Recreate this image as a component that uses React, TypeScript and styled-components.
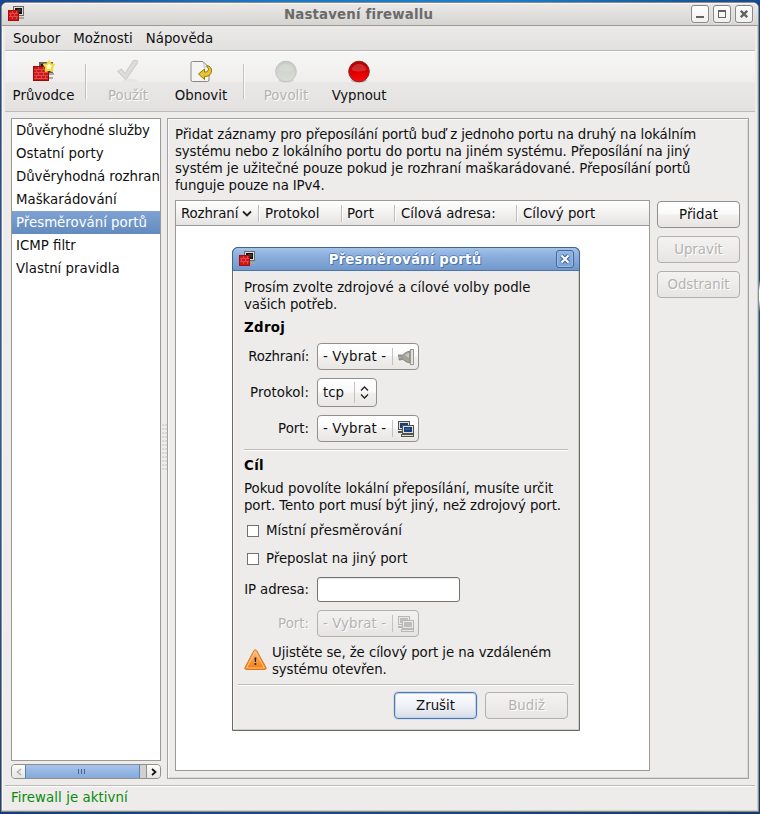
import React from 'react';
import styled, { createGlobalStyle, css } from 'styled-components';

const Global = createGlobalStyle`
  * { box-sizing: border-box; }
  body {
    margin: 0;
    font-family: "DejaVu Sans", sans-serif;
    font-size: 13.333px;
    line-height: 17px;
    color: #101010;
  }
`;

const Desktop = styled.main`
  width: 760px;
  height: 814px;
  padding: 2px 1px;
  overflow: hidden;
  background:
    linear-gradient(90deg, #1a4590, #1c78c4 35%, #1a80cc 65%, #174a8c) top / 100% 3px no-repeat,
    linear-gradient(90deg, #153d7c, #1d4a82 40%, #143c68) bottom / 100% 3px no-repeat,
    linear-gradient(180deg, #174480 0 280px, #f4ffff 290px 300px, #1a4f88 312px, #143860) right / 2px 100% no-repeat,
    linear-gradient(180deg, #1a4590, #2060b0 50%, #1a3f7c);
`;

const Window = styled.section`
  width: 758px;
  height: 810px;
  border: 1px solid #8e8c88;
  border-radius: 6px 6px 0 0;
  background: #edeceb;
  display: flex;
  flex-direction: column;
  box-shadow: inset -1px -1px #cfcdca, inset 1px 0 #f8f8f7;
`;

const TitleBar = styled.header`
  height: 23px;
  flex: none;
  display: grid;
  grid-template-columns: 24px 1fr 67px;
  align-items: center;
  border-bottom: 1px solid #9c9a96;
  border-radius: 5px 5px 0 0;
  box-shadow: inset 0 1px #f8f8f7;
  background: linear-gradient(#ebeae8, #d6d4d1);
`;

const Title = styled.h1<{ $light?: boolean }>`
  margin: 0;
  font-size: 13.333px;
  font-weight: bold;
  letter-spacing: 0.18px;
  text-align: center;
  white-space: nowrap;
  color: ${p => (p.$light ? '#fff' : '#6a6a6a')};
  ${p => p.$light && css`text-shadow: 1px 1px #4a74aa, -1px 0 #5f88bd, 0 -1px #5f88bd;`}
`;

const Line = styled.span<{ $track?: number }>`
  letter-spacing: ${p => p.$track ?? 0}px;
`;

const WindowButtons = styled.div`
  display: flex;
  gap: 4px;
`;

const WindowButton = styled.button<{ $blue?: boolean }>`
  width: 18px;
  height: 18px;
  padding: 0;
  display: grid;
  place-items: center;
  border: 1px solid ${p => (p.$blue ? '#3f6799' : '#8a8885')};
  border-radius: 3px;
  background: ${p => (p.$blue ? 'linear-gradient(#93b4e0, #7da2d3)' : 'linear-gradient(#fff, #f0f0ef)')};
  box-shadow: ${p => (p.$blue ? 'inset 0 0 0 1px #9dbbe4' : '0 0 0 1px #e4e3e1')};
`;

const MenuBar = styled.nav`
  height: 25px;
  margin: 0 3px;
  flex: none;
  display: flex;
  gap: 13px;
  padding: 4px 8px 0;
  border-bottom: 1px solid #bcbab8;
  background: linear-gradient(#ebeae9, #e2e1e0);
`;

const ToolBar = styled.div`
  height: 61px;
  margin: 0 3px;
  flex: none;
  display: flex;
  border-top: 1px solid #fff;
  border-bottom: 1px solid #bcbab8;
  background: linear-gradient(#f6f6f4, #efeeed 50%, #e9e8e7 51%, #e3e2e1);
`;

const Tool = styled.div<{ $w: number; $off?: boolean }>`
  width: ${p => p.$w}px;
  display: flex;
  flex-direction: column;
  align-items: center;
  padding-top: 7px;
  gap: 4px;
  white-space: nowrap;
  ${p => p.$off && css`color: #b5b3b0; text-shadow: 1px 1px #fff;`}
  svg { height: 24px; }
`;

const ToolDivider = styled.i<{ $left: number }>`
  width: 2px;
  height: 35px;
  margin: 12px 0 0 ${p => p.$left}px;
  border-left: 1px solid #c4c2c0;
  border-right: 1px solid #fafafa;
`;

const Workspace = styled.div`
  height: 673px;
  flex: none;
  display: flex;
  padding: 6px 8px 6px 9px;
`;

const SideColumn = styled.aside`
  width: 150px;
  height: 661px;
  display: flex;
  flex-direction: column;
  gap: 3px;
`;

const List = styled.ul`
  list-style: none;
  margin: 0;
  padding: 0;
  height: 643px;
  border: 1px solid #9c9a95;
  background: #fff;
  overflow: hidden;
`;

const ListItem = styled.li<{ $on?: boolean }>`
  height: 23px;
  padding: 3px 0 0 4px;
  white-space: nowrap;
  ${p => p.$on && css`background: linear-gradient(#7fa2d3, #638bbf); color: #fff;`}
`;

const ScrollBar = styled.div`
  height: 15px;
  display: flex;
  border: 1px solid #918f8b;
  border-radius: 4px;
  overflow: hidden;
  background: #d3d1ce;
`;

const ScrollArrow = styled.div<{ $end?: boolean }>`
  width: ${p => (p.$end ? 14 : 13)}px;
  display: grid;
  place-items: center;
  background: linear-gradient(#fbfbfa, #e6e5e4);
  ${p => p.$end && css`margin-left: auto; border-left: 1px solid #918f8b;`}
`;

const ScrollThumb = styled.div`
  width: 115px;
  display: flex;
  align-items: center;
  justify-content: center;
  gap: 2px;
  padding-right: 2px;
  border: 1px solid #5b80b3;
  border-width: 0 1px;
  background: linear-gradient(#a6c3eb, #86a9da);
  i { width: 1px; height: 5px; background: #45658f; }
`;

const Splitter = styled.div`
  width: 6px;
  height: 48px;
  margin-top: 306px;
  background: radial-gradient(circle at 1px 1px, #c8c6c3 0 0.5px, transparent 1px) 1px 0 / 3px 4px;
`;

const Frame = styled.section`
  width: 582px;
  height: 661px;
  border: 1px solid #a5a29e;
  box-shadow: inset 1px 1px #f9f9f8, inset -1px -1px #dad8d6;
  padding: 7px;
`;

const Intro = styled.div`
  height: 74px;
  display: flex;
  flex-direction: column;
  white-space: nowrap;
`;

const PortArea = styled.div`
  display: flex;
  gap: 7px;
`;

const Table = styled.div`
  width: 475px;
  height: 571px;
  border: 1px solid #9c9a95;
  background: #fff;
`;

const TableHead = styled.div`
  height: 25px;
  display: flex;
  align-items: center;
  border-bottom: 1px solid #9c9a95;
  background: linear-gradient(#fff, #f3f2f1 50%, #e4e3e2);
`;

const Column = styled.div<{ $w?: number; $pad: number }>`
  ${p => (p.$w ? css`width: ${p.$w}px;` : css`flex: 1;`)}
  height: 17px;
  padding-left: ${p => p.$pad}px;
  display: flex;
  align-items: center;
  gap: 4px;
  white-space: nowrap;
  & + & { border-left: 1px solid #bfbdba; box-shadow: inset 1px 0 #fff; }
`;

const ActionColumn = styled.div`
  display: flex;
  flex-direction: column;
  gap: 8px;
  padding-top: 1px;
`;

const Button = styled.button<{ $off?: boolean; $focus?: boolean }>`
  width: 83px;
  height: 27px;
  padding: 0 0 1px;
  font: inherit;
  color: #101010;
  border: 1px solid #928f8b;
  border-radius: 4px;
  background: linear-gradient(#fff, #fafafa 45%, #f0efee 55%, #e6e5e4);
  ${p => p.$off && css`
    color: #b5b3b0; text-shadow: 1px 1px #fff; border-color: #b3b0ac;
    background: linear-gradient(#f3f2f1, #edecea 50%, #e6e5e3);
  `}
  ${p => p.$focus && css`
    border-color: #4d78b0; box-shadow: inset 0 0 0 1px #c5d4e8, 0 0 0 1px #d5dfeb;
    background: linear-gradient(#fbfcfe, #eff2f7 50%, #d8dde6);
  `}
`;

const StatusBar = styled.footer`
  flex: 1;
  margin: 0 3px;
  padding: 3px 6px 0;
  border-top: 1px solid #bcbab8;
  box-shadow: inset 0 1px #fff;
  color: #0b8a0b;
`;

const Dialog = styled.section`
  position: absolute;
  left: 232px;
  top: 247px;
  width: 348px;
  height: 484px;
  display: flex;
  flex-direction: column;
  border: 1px solid #6a6865;
  border-radius: 6px 6px 0 0;
  background: #edeceb;
  box-shadow: inset -1px -1px #cfcdca, inset 1px 0 #f8f8f7;
`;

const DialogTitle = styled.header`
  flex: none;
  height: 24px;
  margin: -1px -1px 0;
  display: grid;
  grid-template-columns: 23px 1fr 23px;
  align-items: center;
  border: 1px solid #41648f;
  border-bottom-color: #4d74a8;
  border-radius: 6px 6px 0 0;
  background: linear-gradient(#a6c3ea, #8fb1df 30%, #7298cb);
  ${Title} { padding-right: 2px; }
`;

const DialogBody = styled.div`
  padding: 8px 11px 0;
  display: flex;
  flex-direction: column;
`;

const Paragraph = styled.div<{ $top?: number }>`
  margin-top: ${p => p.$top ?? 0}px;
  display: flex;
  flex-direction: column;
  white-space: nowrap;
`;

const Heading = styled.h2`
  margin: 6px 0 0;
  height: 17px;
  font-size: 13.333px;
  line-height: 17px;
  font-weight: bold;
  letter-spacing: 0.35px;
  color: #000;
`;

const Field = styled.div<{ $h: number; $top: number; $off?: boolean }>`
  height: ${p => p.$h}px;
  margin-top: ${p => p.$top}px;
  display: grid;
  grid-template-columns: 65px max-content;
  column-gap: 8px;
  align-items: center;
  > span { justify-self: end; white-space: nowrap; padding-bottom: 1px; }
  ${p => p.$off && css`color: #b5b3b0; text-shadow: 1px 1px #fff;`}
`;

const Picker = styled.div<{ $w: number; $off?: boolean }>`
  width: ${p => p.$w}px;
  height: 100%;
  display: flex;
  align-items: center;
  padding-left: 5px;
  white-space: nowrap;
  border: 1px solid ${p => (p.$off ? '#b3b0ac' : '#928f8b')};
  border-radius: 4px;
  background: ${p => (p.$off ? 'linear-gradient(#f3f2f1, #e6e5e3)' : 'linear-gradient(#fff, #fafafa 45%, #f0efee 55%, #e8e7e6)')};
  > span { padding-bottom: 1px; }
`;

const PickerIcon = styled.div<{ $h: number }>`
  margin-left: auto;
  height: ${p => p.$h}px;
  padding: 0 4px 0 5px;
  display: grid;
  align-items: center;
  border-left: 1px solid #c4c2c0;
`;

const Rule = styled.hr<{ $top: number; $wide?: boolean }>`
  height: 2px;
  margin: ${p => p.$top}px ${p => (p.$wide ? -6 : 0)}px 0;
  border: 0;
  border-top: 1px solid #bfbdba;
  border-bottom: 1px solid #fff;
`;

const Check = styled.label<{ $top: number }>`
  height: 17px;
  margin: ${p => p.$top}px 0 0 3px;
  display: flex;
  align-items: center;
  gap: 7px;
  white-space: nowrap;
`;

const Box = styled.i`
  width: 12px;
  height: 12px;
  margin-top: 1px;
  border: 1px solid #75726f;
  background: #fff;
`;

const Entry = styled.input`
  width: 143px;
  height: 25px;
  padding: 0 4px;
  border: 1px solid #75726f;
  border-radius: 3px;
  background: #fff;
  box-shadow: inset 0 1px #e8e7e6;
`;

const Notice = styled.div`
  height: 34px;
  margin-top: 7px;
  display: flex;
  gap: 5px;
  svg { margin-top: 5px; }
`;

const Footer = styled.div`
  display: flex;
  justify-content: flex-end;
  gap: 8px;
  margin-top: 6px;
`;

const FirewallIcon = () => (
  <svg width="17" height="16" viewBox="0 0 17 16" shapeRendering="crispEdges">
    <rect x="5" y="0" width="11" height="10" fill="#6a6a62" />
    <rect x="6" y="1" width="9" height="8" fill="#dcdcd0" />
    <rect x="7" y="2" width="7" height="6" fill="#0b1218" />
    <rect x="9" y="3" width="4" height="3" fill="#30383e" />
    <path d="M10 11h6v2h-6z" fill="#a5a59b" />
    <rect x="0" y="4" width="11" height="11" fill="#a80b0b" />
    <rect x="1" y="5" width="9" height="9" fill="#cf1616" />
    <path d="M1 7h9v1H1zM1 10h9v1H1zM4 5h1v2H4zM8 5h1v2H8zM2 8h1v2H2zM6 8h1v2H6zM4 11h1v2H4zM8 11h1v2H8z" fill="#e04a44" />
  </svg>
);

const WizardIcon = () => (
  <svg width="22" height="24" viewBox="0 0 22 24">
    <g shapeRendering="crispEdges">
      <rect x="6" y="3" width="14" height="13" fill="#66665f" />
      <rect x="8" y="5" width="10" height="8" fill="#10171c" />
      <path d="M15 14h6v2h-6zM15 18h5v2h-5z" fill="#a9a99f" />
      <rect x="0" y="7" width="16" height="15" fill="#9a0808" />
      <rect x="1" y="8" width="14" height="13" fill="#cb1818" />
      <path d="M1 10h14v1H1zM1 13h14v1H1zM1 16h14v1H1zM1 19h14v1H1zM5 8h1v2H5zM10 8h1v2h-1zM3 11h1v2H3zM8 11h1v2H8zM12 11h1v2h-1zM5 14h1v2H5zM10 14h1v2h-1zM3 17h1v2H3zM8 17h1v2H8zM12 17h1v2h-1z" fill="#e04a44" />
    </g>
    <path d="M16 2.200l1.700 3 3.300.5-2.200 2.700.5 3.600-3.300-1.300-3.300 1.300.5-3.600L11 5.700l3.300-.5z" fill="#fffde4" stroke="#f2dc3c" strokeWidth="2" strokeLinejoin="round" />
  </svg>
);

const ApplyIcon = () => (
  <svg width="24" height="24" viewBox="0 0 24 24">
    <ellipse cx="14" cy="21.500" rx="8" ry="1.500" fill="#e6e5e3" />
    <path d="M1.500 12.500l4-2.500 3.500 4.500L17.500 1.500h3.500l1 1.500L10 20.500z" fill="#dddcd8" stroke="#c9c8c4" strokeLinejoin="round" />
  </svg>
);

const RefreshIcon = () => (
  <svg width="22" height="24" viewBox="0 0 22 24">
    <path d="M2.500 2.500H13l6 6V21q0 1.500-1.500 1.500h-15Q1 22.500 1 21V4q0-1.500 1.500-1.500z" fill="#f4f4f3" stroke="#8a8884" />
    <path d="M13 3q1.500 2 1 5 3-.5 5 .8z" fill="#fff" stroke="#b0aeaa" strokeWidth=".8" />
    <path d="M17 6.500q4.700 1 4.500 5.500-.5 5.500-7 5.500v3L8.500 15l6-5v3.200q3.500.2 4-2.700.1-1.800-1.500-2.500z" fill="#e6c630" stroke="#96760c" strokeLinejoin="round" />
  </svg>
);

const Lamp = ({ off }: { off?: boolean }) => (
  <svg width="22" height="24" viewBox="0 0 22 24">
    <defs>
      <linearGradient id={off ? 'lampOff' : 'lampOn'} x1="0" y1="0" x2="0" y2="1">
        <stop offset="0" stopColor={off ? '#c6cac4' : '#a80000'} />
        <stop offset=".6" stopColor={off ? '#d2d6cf' : '#e00000'} />
        <stop offset="1" stopColor={off ? '#d9ddd6' : '#ff0a0a'} />
      </linearGradient>
    </defs>
    <ellipse cx="11" cy="21.500" rx="8" ry="2" fill={off ? '#dad9d7' : '#bcb5b3'} />
    <circle cx="11" cy="12.500" r="10.300" fill={`url(#${off ? 'lampOff' : 'lampOn'})`} stroke={off ? '#bfc2bd' : '#8e2020'} />
    <path d="M3.500 11a7.600 7.600 0 0 1 15 0q-7.500 3-15 0z" fill="#fff" opacity=".17" />
  </svg>
);

const PlugIcon = () => (
  <svg width="16" height="16" viewBox="0 0 16 16">
    <path d="M0 6h4.500Q8 2.500 12 2v12Q8 13.500 5 10.500L1 11V9.300h3V8H0z" fill="#a3a29b" stroke="#7d7d76" strokeWidth=".8" />
    <rect x="12.500" y=".5" width="3" height="15" fill="#e3e2da" stroke="#9b9a92" />
    <path d="M7 6q2-2 4-2v5z" fill="#c9c8c1" />
  </svg>
);

const ScreensIcon = ({ off }: { off?: boolean }) => {
  const edge = off ? '#b9b7b4' : '#50534f';
  const rim = off ? '#e9e8e7' : '#deded2';
  const glass = off ? '#bfbdbb' : '#173e7c';
  return (
    <svg width="16" height="16" viewBox="0 0 16 16" shapeRendering="crispEdges">
      <rect x="0" y="0" width="12" height="9" fill={edge} />
      <rect x="1" y="1" width="10" height="7" fill={rim} />
      <rect x="2" y="2" width="8" height="5" fill={glass} />
      <path d="M0 10h5v2H0z" fill={edge} />
      <rect x="4" y="4" width="12" height="9" fill={edge} />
      <rect x="5" y="5" width="10" height="7" fill={rim} />
      <rect x="6" y="6" width="8" height="5" fill={glass} />
      {!off && <path d="M7 7h5v2H7z" fill="#2c5a9c" />}
      <rect x="3" y="13" width="13" height="3" fill={edge} />
      <rect x="4" y="14" width="11" height="1" fill={rim} />
    </svg>
  );
};

const WarningIcon = () => (
  <svg width="23" height="22" viewBox="0 0 23 22">
    <defs>
      <linearGradient id="warn" x1="0" y1="0" x2="0" y2="1">
        <stop offset="0" stopColor="#fbb878" />
        <stop offset=".7" stopColor="#f78f2e" />
        <stop offset="1" stopColor="#f57900" />
      </linearGradient>
    </defs>
    <path d="M10 1.500q1.200-1.500 2.600 0L22 18.500q.7 2-1.500 2h-18q-2.200 0-1.500-2z" fill="url(#warn)" stroke="#dc7418" />
    <path d="M11.300 3L20.500 19h-18z" fill="none" stroke="#fcc890" />
    <path d="M10.500 8.500h1.800l-.4 4.500h-1z" fill="#222" />
    <circle cx="11.400" cy="15" r="1" fill="#222" />
  </svg>
);

const items: { name: string; track?: number }[] = [
  { name: 'Důvěryhodné služby', track: -0.15 },
  { name: 'Ostatní porty' },
  { name: 'Důvěryhodná rozhraní', track: -0.06 },
  { name: 'Maškarádování' },
  { name: 'Přesměrování portů' },
  { name: 'ICMP filtr' },
  { name: 'Vlastní pravidla' },
];

export default function App() {
  return (
    <Desktop>
      <Global />
      <Window>
        <TitleBar>
          <svg width="24" height="16" viewBox="-6 0 24 16"><FirewallIcon /></svg>
          <Title>Nastavení firewallu</Title>
          <WindowButtons>
            <WindowButton><svg width="8" height="8"><path d="M0 6h8v2H0z" fill="#646462" /></svg></WindowButton>
            <WindowButton><svg width="8" height="8" shapeRendering="crispEdges"><path d="M0 0h8v8H0zM1 2v5h6V2z" fill="#646462" fillRule="evenodd" /></svg></WindowButton>
            <WindowButton><svg width="8" height="8"><path d="M.8.800l6.400 6.400M7.200.800L.8 7.200" stroke="#646462" strokeWidth="2.400" /></svg></WindowButton>
          </WindowButtons>
        </TitleBar>
        <MenuBar><span>Soubor</span><Line $track={0.06}>Možnosti</Line><span>Nápověda</span></MenuBar>
        <ToolBar>
          <Tool $w={77}><WizardIcon />Průvodce</Tool>
          <ToolDivider $left={3} />
          <Tool $w={82} $off><ApplyIcon />Použít</Tool>
          <Tool $w={64}><RefreshIcon />Obnovit</Tool>
          <ToolDivider $left={10} />
          <Tool $w={82} $off><Lamp off />Povolit</Tool>
          <Tool $w={64}><Lamp /><Line $track={-0.1}>Vypnout</Line></Tool>
        </ToolBar>
        <Workspace>
          <SideColumn>
            <List>
              {items.map((item, i) => (
                <ListItem key={item.name} $on={i === 4}><Line $track={item.track}>{item.name}</Line></ListItem>
              ))}
            </List>
            <ScrollBar>
              <ScrollArrow><svg width="6" height="8"><path d="M5 1L1.500 4 5 7" fill="none" stroke="#b0aeab" strokeWidth="1.500" /></svg></ScrollArrow>
              <ScrollThumb><i /><i /><i /></ScrollThumb>
              <ScrollArrow $end><svg width="6" height="8"><path d="M1 1l3.500 3L1 7" fill="none" stroke="#111" strokeWidth="1.700" /></svg></ScrollArrow>
            </ScrollBar>
          </SideColumn>
          <Splitter />
          <Frame>
            <Intro>
              <Line $track={-0.117}>Přidat záznamy pro přeposílání portů buď z jednoho portu na druhý na lokálním</Line>
              <Line $track={-0.105}>systému nebo z lokálního portu do portu na jiném systému. Přeposílání na jiný</Line>
              <Line $track={-0.082}>systém je užitečné pouze pokud je rozhraní maškarádované. Přeposílání portů</Line>
              <Line $track={-0.13}>funguje pouze na IPv4.</Line>
            </Intro>
            <PortArea>
              <Table>
                <TableHead>
                  <Column $w={82} $pad={5}><Line $track={-0.1}>Rozhraní</Line><svg width="10" height="7"><path d="M1 1.500l4 4 4-4" fill="none" stroke="#222" strokeWidth="1.800" /></svg></Column>
                  <Column $w={83} $pad={6}><Line $track={0.12}>Protokol</Line></Column>
                  <Column $w={53} $pad={5}><Line $track={0.15}>Port</Line></Column>
                  <Column $w={122} $pad={6}>Cílová adresa:</Column>
                  <Column $pad={6}>Cílový port</Column>
                </TableHead>
              </Table>
              <ActionColumn>
                <Button>Přidat</Button>
                <Button $off>Upravit</Button>
                <Button $off>Odstranit</Button>
              </ActionColumn>
            </PortArea>
          </Frame>
        </Workspace>
        <StatusBar><Line $track={0.07}>Firewall je aktivní</Line></StatusBar>
      </Window>
      <Dialog>
        <DialogTitle>
          <svg width="24" height="16" viewBox="-6 0 24 16"><FirewallIcon /></svg>
          <Title $light>Přesměrování portů</Title>
          <WindowButton $blue><svg width="12" height="12"><path d="M2.500 2.500l7 7M9.500 2.500l-7 7" stroke="#3f6799" strokeWidth="4.200" /><path d="M2.500 2.500l7 7M9.500 2.500l-7 7" stroke="#fff" strokeWidth="2" /></svg></WindowButton>
        </DialogTitle>
        <DialogBody>
          <Paragraph>
            <Line $track={-0.02}>Prosím zvolte zdrojové a cílové volby podle</Line>
            <Line $track={-0.1}>vašich potřeb.</Line>
          </Paragraph>
          <Heading>Zdroj</Heading>
          <Field $h={27} $top={7}><Line $track={-0.2}>Rozhraní:</Line><Picker $w={102}><Line $track={0.1}>- Vybrat -</Line><PickerIcon $h={17}><PlugIcon /></PickerIcon></Picker></Field>
          <Field $h={29} $top={8}><Line $track={0.1}>Protokol:</Line><Picker $w={60}><span>tcp</span><PickerIcon $h={21}><svg width="12" height="13"><path d="M1 4.500L4.500 1 8 4.500M1 8.500L4.500 12 8 8.500" fill="none" stroke="#222" strokeWidth="1.300" /></svg></PickerIcon></Picker></Field>
          <Field $h={27} $top={8}><span>Port:</span><Picker $w={102}><Line $track={0.1}>- Vybrat -</Line><PickerIcon $h={17}><ScreensIcon /></PickerIcon></Picker></Field>
          <Rule $top={7} />
          <Heading>Cíl</Heading>
          <Paragraph $top={6}>
            <Line $track={-0.03}>Pokud povolíte lokální přeposílání, musíte určit</Line>
            <Line $track={-0.1}>port. Tento port musí být jiný, než zdrojový port.</Line>
          </Paragraph>
          <Check $top={8}><Box /><Line $track={0.04}>Místní přesměrování</Line></Check>
          <Check $top={11}><Box /><Line $track={-0.04}>Přeposlat na jiný port</Line></Check>
          <Field $h={25} $top={10}><Line $track={-0.1}>IP adresa:</Line><Entry /></Field>
          <Field $h={27} $top={8} $off><span>Port:</span><Picker $w={102} $off><Line $track={0.1}>- Vybrat -</Line><PickerIcon $h={17}><ScreensIcon off /></PickerIcon></Picker></Field>
          <Notice>
            <WarningIcon />
            <Paragraph>
              <Line $track={-0.085}>Ujistěte se, že cílový port je na vzdáleném</Line>
              <Line $track={-0.11}>systému otevřen.</Line>
            </Paragraph>
          </Notice>
          <Rule $top={6} $wide />
          <Footer><Button $focus>Zrušit</Button><Button $off>Budiž</Button></Footer>
        </DialogBody>
      </Dialog>
    </Desktop>
  );
}
